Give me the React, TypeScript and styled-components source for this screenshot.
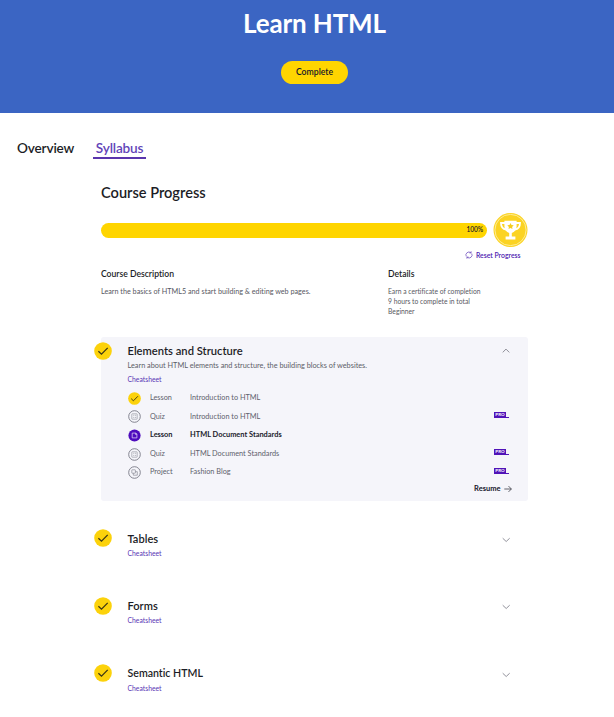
import React from "react";
import styled, { createGlobalStyle } from "styled-components";

const GlobalStyle = createGlobalStyle`
  * { box-sizing: border-box; }
  body { margin: 0; background: #fff; color: #1c1d26; font-family: Lato, "Noto Sans", sans-serif; font-variant-ligatures: none; }
  h1, h2, h3, p { margin: 0; }
  svg { display: block; flex: none; }
`;

const Page = styled.div`
  width: 614px;
  height: 717px;
  overflow: hidden;
  background: #fff;
`;

const Hero = styled.header`
  height: 113px;
  padding: 6px 0 0 15px;
  background: #3b65c3;
  display: flex;
  flex-direction: column;
  align-items: center;
`;

const HeroTitle = styled.h1`
  font-size: 26px;
  line-height: 34px;
  font-weight: 700;
  letter-spacing: -0.15px;
  color: #fff;
`;

const CompleteButton = styled.button`
  width: 67px;
  height: 23px;
  margin-top: 21px;
  padding: 0 0 1px;
  border: 0;
  border-radius: 12px;
  background: #ffd500;
  color: #14162a;
  font: 600 8.7px/22px Lato, sans-serif;
`;

const Tabs = styled.nav`
  display: flex;
  gap: 19px;
  height: 66px;
  padding: 26px 0 0 17px;
`;

const Tab = styled.a<{ $active?: boolean }>`
  height: 20px;
  padding: 0 ${(p) => (p.$active ? "3px 0 2.5px" : "0")};
  border-bottom: 2px solid ${(p) => (p.$active ? "#5a35ad" : "transparent")};
  color: ${(p) => (p.$active ? "#6244b8" : "#1c1d26")};
  font-size: 13.6px;
  line-height: 19px;
  font-weight: 600;
  letter-spacing: -0.15px;
`;

const Content = styled.main`
  width: 427px;
  margin-left: 101px;
`;

const ProgressTitle = styled.h2`
  height: 34px;
  padding-top: 4px;
  font-size: 14.6px;
  line-height: 20px;
  font-weight: 600;
`;

const ProgressRow = styled.div`
  display: flex;
  align-items: center;
  justify-content: space-between;
  height: 35px;
`;

const ProgressBar = styled.div`
  width: 386px;
  height: 15px;
  padding-right: 4px;
  border-radius: 8px;
  background: #ffd500;
  text-align: right;
  font-size: 6.6px;
  line-height: 13px;
  font-weight: 600;
  letter-spacing: -0.1px;
`;

const ResetLink = styled.a`
  display: flex;
  align-items: center;
  justify-content: flex-end;
  gap: 3px;
  height: 13px;
  margin-bottom: 1px;
  padding-right: 7.5px;
  color: #4d20b0;
  font-size: 6.85px;
  font-weight: 600;
`;

const Info = styled.section`
  display: grid;
  grid-template-columns: 287px 1fr;
  height: 75px;
  padding-top: 6px;
`;

const InfoTitle = styled.h3`
  height: 18px;
  font-size: 8.6px;
  line-height: 12px;
  font-weight: 600;
`;

const InfoText = styled.p<{ $compact?: boolean }>`
  font-size: ${(p) => (p.$compact ? "6.75px" : "7.22px")};
  line-height: ${(p) => (p.$compact ? "10px" : "12px")};
  color: #575862;
`;

const Module = styled.section<{ $open?: boolean }>`
  position: relative;
  height: ${(p) => (p.$open ? "163.5px" : "67.5px")};
  padding: 6px 16px 0 26.5px;
  border-radius: 3px;
  background: ${(p) => (p.$open ? "#f5f5fa" : "transparent")};
  ${(p) => p.$open && "margin-bottom: 24px;"}
`;

const ModuleBadge = styled.div`
  position: absolute;
  left: -7.5px;
  top: 4.5px;
`;

const ModuleHead = styled.div`
  display: flex;
  align-items: center;
  justify-content: space-between;
  height: 15px;
`;

const ModuleTitle = styled.h3<{ $size: number }>`
  font-size: ${(p) => p.$size}px;
  line-height: 15px;
  font-weight: 600;
`;

const ModuleText = styled.p`
  height: 14px;
  font-size: 7.32px;
  line-height: 15px;
  color: #5c5d67;
`;

const Cheatsheet = styled.a`
  display: block;
  height: 14px;
  font-size: 6.8px;
  line-height: 14px;
  color: #5a35b5;
`;

const LessonList = styled.div`
  padding-top: 3px;
`;

const LessonRow = styled.div<{ $current?: boolean }>`
  display: grid;
  grid-template-columns: 22.5px 40px 1fr 18px;
  align-items: center;
  height: 18.6px;
  font-size: ${(p) => (p.$current ? 7.42 : 7.3)}px;
  line-height: 16px;
  font-weight: ${(p) => (p.$current ? 700 : 400)};
  color: ${(p) => (p.$current ? "#20212b" : "#60616c")};
`;

const RowLabel = styled.span`
  padding-bottom: 0.5px;
`;

const ProBadge = styled.span`
  display: flex;
  align-items: flex-end;
  margin-top: -4px;
  height: 6px;
`;

const ProBox = styled.span`
  width: 12px;
  height: 6px;
  background: #5013b8;
  color: #fff;
  text-align: center;
  font-size: 4.5px;
  line-height: 6px;
  font-weight: 700;
`;

const ProLine = styled.span`
  width: 3px;
  height: 1px;
  background: #5013b8;
`;

const ResumeLink = styled.a`
  display: flex;
  align-items: center;
  justify-content: flex-end;
  gap: 3px;
  height: 14px;
  padding-right: 0.5px;
  font-size: 7.5px;
  font-weight: 700;
  color: #14152a;
`;

const CheckIcon = ({ size }: { size: number }) => (
  <svg width={size} height={size} viewBox="0 0 18 18">
    <circle cx="9" cy="9" r="8.8" fill="#fcd20b" />
    <path d="M4.4 9.2 7.5 12.2 13.7 5.9" fill="none" stroke="#3a3516" strokeWidth="1.25" />
  </svg>
);

const QuizIcon = () => (
  <svg width="13" height="13" viewBox="0 0 13 13" fill="none" stroke="#777884">
    <circle cx="6.5" cy="6.5" r="5.8" strokeWidth=".9" />
    <rect x="3.8" y="3.8" width="5.4" height="5.4" rx=".5" strokeWidth=".5" />
    <path d="M5 5.3h.8M6.7 5.3h1.5M5 7.4h.8M6.7 7.4h1.5" strokeWidth=".5" />
  </svg>
);

const CurrentIcon = () => (
  <svg width="13" height="13" viewBox="0 0 13 13" fill="none">
    <circle cx="6.5" cy="6.5" r="6.1" fill="#4e0bbd" />
    <path d="M4.2 4.1h3.7l1 .8v4H4.2zM7.5 4.2v1.2h1.3" stroke="#d9c9f5" strokeWidth=".8" />
  </svg>
);

const ProjectIcon = () => (
  <svg width="13" height="13" viewBox="0 0 13 13" fill="none" stroke="#777884">
    <circle cx="6.5" cy="6.5" r="5.8" strokeWidth=".9" />
    <rect x="3.8" y="3.8" width="3.6" height="3.4" rx=".4" strokeWidth=".6" />
    <path d="M5.3 7.2v2h4V5.7H7.4" strokeWidth=".6" />
  </svg>
);

const Chevron = ({ up }: { up?: boolean }) => (
  <svg width="11" height="9" viewBox="0 0 11 9" fill="none" stroke="#85858e" strokeWidth=".9">
    <path d={up ? "M1.7 6.4 5 3.1 8.3 6.4" : "M1.7 4.2 5.2 7.5 8.7 4.2"} />
  </svg>
);

const ResetIcon = () => (
  <svg width="8" height="8" viewBox="0 0 8 8" fill="none" stroke="#5a35b5" strokeWidth=".65">
    <path d="M1.3 5.5A3 3 0 0 1 5.8 1.7M6.7 2.5A3 3 0 0 1 2.2 6.3M4.4 1.9h1.7V.3M3.6 6.1H1.9v1.6" />
  </svg>
);

const Arrow = () => (
  <svg width="8" height="8" viewBox="0 0 8 8" fill="none" stroke="#30313b" strokeWidth=".75">
    <path d="M.3 4h7M4.5 1.1 7.4 4 4.5 6.9" />
  </svg>
);

const Trophy = () => (
  <svg width="35" height="35" viewBox="0 0 35 35">
    <circle cx="17.5" cy="17" r="17" fill="#fbd323" />
    <circle cx="17.5" cy="17" r="15.6" fill="none" stroke="#fff3b0" strokeWidth=".8" />
    <path d="M12 10H8c0 3.6 1.4 6 5.2 6.5M23 10h4c0 3.6-1.4 6-5.2 6.5" fill="none" stroke="#fff" strokeWidth="1.8" />
    <path d="M11.4 7.8h12.2v5.5c0 3.5-2 5.8-4.8 6.6v3.7h3.6v2.9h-9.8v-2.9h3.6v-3.7c-2.8-.8-4.8-3.1-4.8-6.6z" fill="#fff" />
    <path d="m17.5 10 1 2 2.2.3-1.6 1.6.4 2.2-2-1-2 1 .4-2.2-1.6-1.6 2.2-.3z" fill="#f5cd1e" />
  </svg>
);

type Kind = "done" | "quiz" | "current" | "project";

const icons: Record<Kind, React.ReactNode> = {
  done: <CheckIcon size={13} />,
  quiz: <QuizIcon />,
  current: <CurrentIcon />,
  project: <ProjectIcon />,
};

const lessons: { kind: Kind; type: string; name: string; pro?: boolean }[] = [
  { kind: "done", type: "Lesson", name: "Introduction to HTML" },
  { kind: "quiz", type: "Quiz", name: "Introduction to HTML", pro: true },
  { kind: "current", type: "Lesson", name: "HTML Document Standards" },
  { kind: "quiz", type: "Quiz", name: "HTML Document Standards", pro: true },
  { kind: "project", type: "Project", name: "Fashion Blog", pro: true },
];

const closedModules = [
  { title: "Tables", size: 11.1 },
  { title: "Forms", size: 11.1 },
  { title: "Semantic HTML", size: 10.6 },
];

export default function App() {
  return (
    <Page>
      <GlobalStyle />
      <Hero>
        <HeroTitle>Learn HTML</HeroTitle>
        <CompleteButton>Complete</CompleteButton>
      </Hero>
      <Tabs>
        <Tab>Overview</Tab>
        <Tab $active>Syllabus</Tab>
      </Tabs>
      <Content>
        <ProgressTitle>Course Progress</ProgressTitle>
        <ProgressRow>
          <ProgressBar>100%</ProgressBar>
          <Trophy />
        </ProgressRow>
        <ResetLink>
          <ResetIcon />
          Reset Progress
        </ResetLink>
        <Info>
          <div>
            <InfoTitle>Course Description</InfoTitle>
            <InfoText>Learn the basics of HTML5 and start building &amp; editing web pages.</InfoText>
          </div>
          <div>
            <InfoTitle>Details</InfoTitle>
            <InfoText $compact>Earn a certificate of completion</InfoText>
            <InfoText $compact>9 hours to complete in total</InfoText>
            <InfoText $compact>Beginner</InfoText>
          </div>
        </Info>
        <Module $open>
          <ModuleBadge>
            <CheckIcon size={18} />
          </ModuleBadge>
          <ModuleHead>
            <ModuleTitle $size={11.2}>Elements and Structure</ModuleTitle>
            <Chevron up />
          </ModuleHead>
          <ModuleText>Learn about HTML elements and structure, the building blocks of websites.</ModuleText>
          <Cheatsheet>Cheatsheet</Cheatsheet>
          <LessonList>
            {lessons.map((l) => (
              <LessonRow key={l.type + l.name + l.kind} $current={l.kind === "current"}>
                {icons[l.kind]}
                <RowLabel>{l.type}</RowLabel>
                <RowLabel>{l.name}</RowLabel>
                {l.pro && (
                  <ProBadge>
                    <ProBox>PRO</ProBox>
                    <ProLine />
                  </ProBadge>
                )}
              </LessonRow>
            ))}
          </LessonList>
          <ResumeLink>
            Resume
            <Arrow />
          </ResumeLink>
        </Module>
        {closedModules.map((m) => (
          <Module key={m.title}>
            <ModuleBadge>
              <CheckIcon size={18} />
            </ModuleBadge>
            <ModuleHead>
              <ModuleTitle $size={m.size}>{m.title}</ModuleTitle>
              <Chevron />
            </ModuleHead>
            <Cheatsheet>Cheatsheet</Cheatsheet>
          </Module>
        ))}
      </Content>
    </Page>
  );
}
